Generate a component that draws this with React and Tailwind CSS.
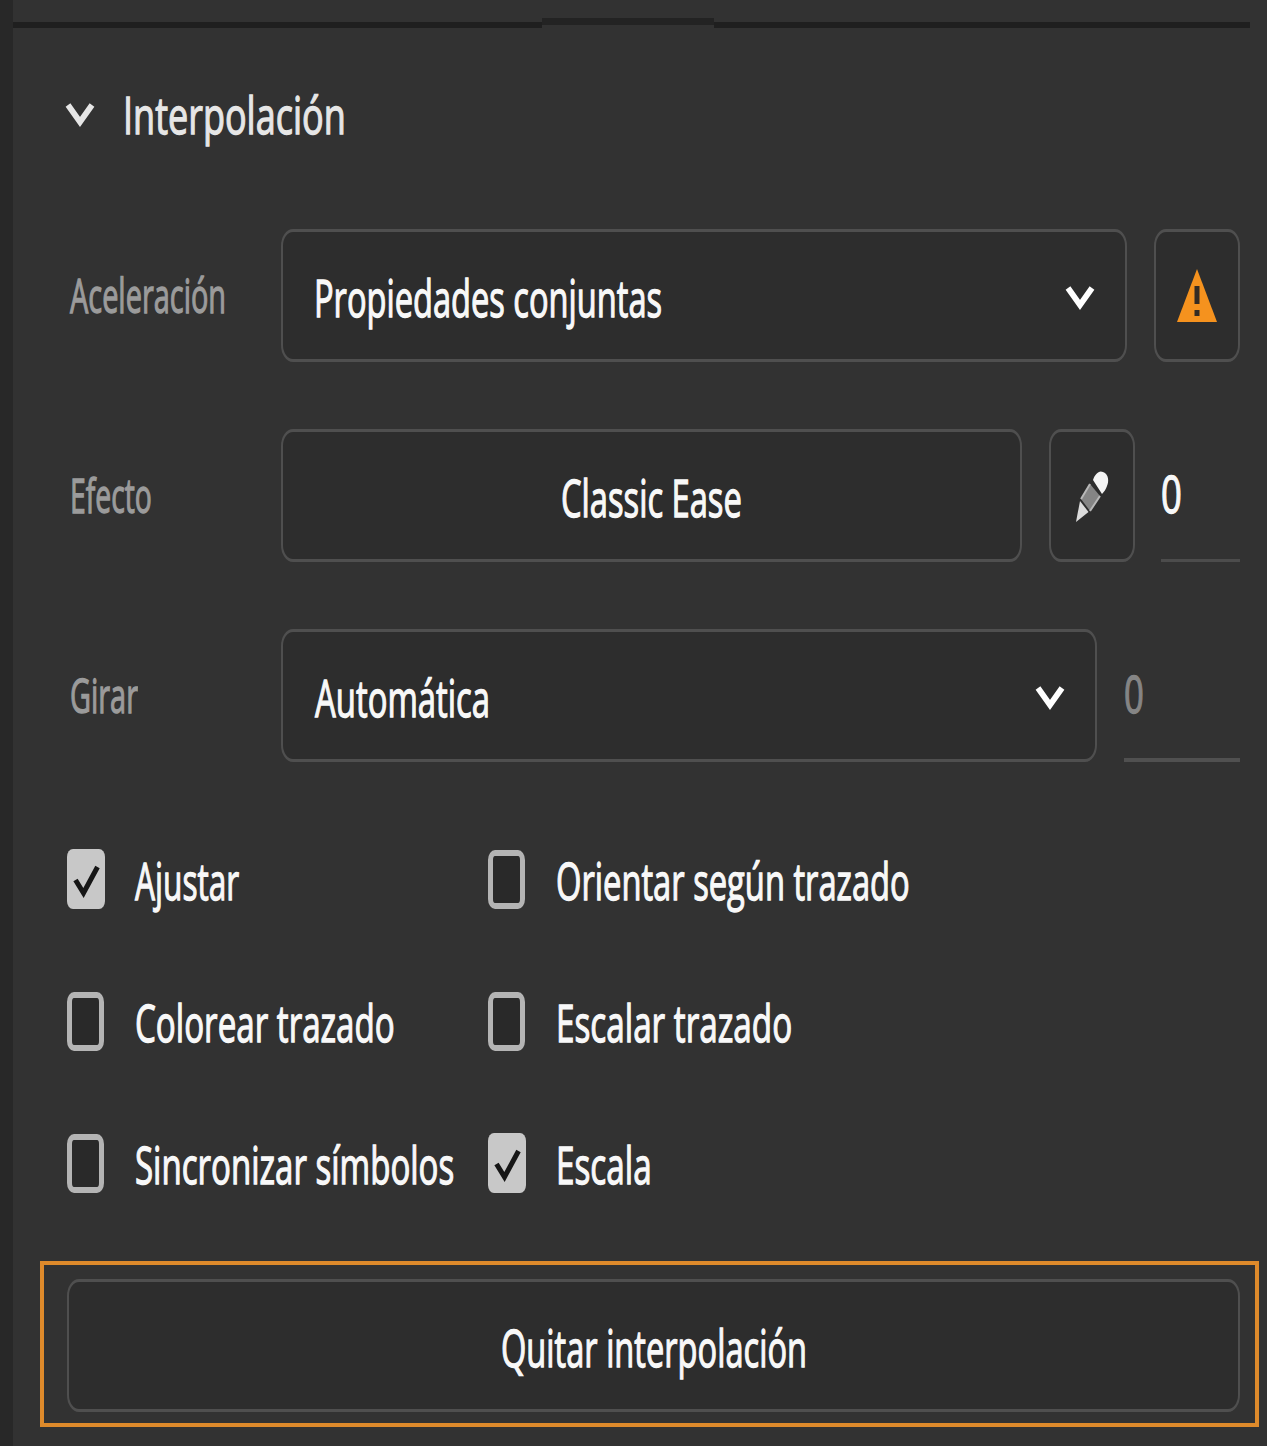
import { useLayoutEffect, useRef, useState } from 'react'

const options = [
  { id: 'snap', label: 'Ajustar', width: 104, checked: true },
  { id: 'orient', label: 'Orientar según trazado', width: 354, checked: false },
  { id: 'color', label: 'Colorear trazado', width: 260, checked: false },
  { id: 'scalePath', label: 'Escalar trazado', width: 236, checked: false },
  { id: 'sync', label: 'Sincronizar símbolos', width: 319, checked: false },
  { id: 'scale', label: 'Escala', width: 96, checked: true },
]

// Condensed text: the line is squeezed horizontally to the given width
function Text({ width, className = '', children }) {
  const ref = useRef(null)
  const [scale, setScale] = useState(0.7)

  useLayoutEffect(() => {
    setScale(width / ref.current.offsetWidth)
  }, [width, children])

  return (
    <span className={`block shrink-0 ${className}`} style={{ width }}>
      <span
        ref={ref}
        className="inline-block origin-left whitespace-nowrap [-webkit-text-stroke:1.3px_currentColor]"
        style={{ transform: `scaleX(${scale})` }}
      >
        {children}
      </span>
    </span>
  )
}

function Chevron({ className = '' }) {
  return (
    <svg viewBox="0 0 30 30" className={`h-[30px] w-[30px] shrink-0 ${className}`} fill="none">
      <path d="M3 6 L15 23 L27 6" stroke="currentColor" strokeWidth="5.8" />
    </svg>
  )
}

function Box({ className = '', children }) {
  return (
    <button
      type="button"
      className={`flex h-[133px] shrink-0 items-center rounded-[12px/17px] border-x-2 border-y-3 border-[#4f4f4f] bg-[#2d2d2d] ${className}`}
    >
      {children}
    </button>
  )
}

function Row({ label, width, children }) {
  return (
    <div className="flex h-[133px] items-center">
      <div className="w-[211px] shrink-0 text-[48px] text-[#9b9b9b]">
        <Text width={width} className="relative -top-px">{label}</Text>
      </div>
      {children}
    </div>
  )
}

function Checkbox({ label, width, checked: initial }) {
  const [checked, setChecked] = useState(initial)

  return (
    <button type="button" className="flex h-[60px] items-center" onClick={() => setChecked(!checked)}>
      {checked ? (
        <span className="block h-[60px] w-[38px] rounded-[6px/8px] bg-[#c8c8c8]">
          <svg viewBox="0 0 38 60" className="h-[60px] w-[38px]" fill="none">
            <path d="M8.5 31 L16.5 44 L30.5 18" stroke="#161616" strokeWidth="5" />
          </svg>
        </span>
      ) : (
        <span className="mr-px block h-[59px] w-[37px] rounded-[7px/10px] border-x-[5px] border-y-[6px] border-[#b4b4b4] bg-[#292929]" />
      )}
      <Text width={width} className="relative top-px ml-[30px]">{label}</Text>
    </button>
  )
}

export default function App() {
  return (
    <div className="flex h-[1446px] w-[1267px] overflow-hidden bg-[#323232] font-['Open_Sans',sans-serif] text-[52px] leading-none text-[#f8f8f8]">
      <div className="w-[13px] shrink-0 bg-[#282828]" />
      <div className="flex w-[1254px] flex-col">
        <div className="flex h-[28px] shrink-0 items-end">
          <div className="h-[6px] w-[529px] bg-[#1f1f1f]" />
          <div className="mb-[3px] h-[7px] w-[172px] bg-[#232323]" />
          <div className="h-[6px] w-[536px] bg-[#1f1f1f]" />
        </div>

        <div className="mt-[62px] flex h-[48px] shrink-0 items-center pl-[52px] text-[#e6e6e6]">
          <Chevron />
          <Text width={223} className="ml-[28px]">Interpolación</Text>
        </div>

        <div className="mt-[91px] flex shrink-0 flex-col gap-[67px] pl-[57px]">
          <Row label="Aceleración" width={156}>
            <Box className="w-[846px] justify-between pr-[30px] pl-[31px]">
              <Text width={348} className="relative top-px">Propiedades conjuntas</Text>
              <Chevron className="mt-[2px] text-white" />
            </Box>
            <Box className="ml-[27px] w-[86px] justify-center">
              <svg viewBox="0 0 40 54" className="h-[54px] w-[40px]">
                <path d="M20 0 L40 53 H0 Z" fill="#f5921e" />
                <path d="M20 17 V35 M20 41 V47" stroke="#332b24" strokeWidth="5" />
              </svg>
            </Box>
          </Row>

          <Row label="Efecto" width={82}>
            <Box className="w-[741px] justify-center">
              <Text width={181} className="relative top-px">Classic Ease</Text>
            </Box>
            <Box className="ml-[27px] w-[86px] justify-center">
              <svg viewBox="0 0 38 56" className="h-[56px] w-[38px]">
                <path d="M20 12 C22 6 26 2 30 4 C36 6 36 14 34 18 C33 21 31 24 29 26 Z" fill="#f4f4f4" />
                <path d="M17 16 L27 28 L17 43 L8 31 Z" fill="#858585" />
                <path d="M17 16 L8 31 M27 28 L17 43" stroke="#b8b8b8" strokeWidth="2" />
                <path d="M7 33 L15.5 44 L3 54 Z" fill="#dcdcdc" />
              </svg>
            </Box>
            <div className="ml-[26px] flex h-[133px] w-[79px] items-center border-b-3 border-[#4c4c4c]">
              <Text width={21} className="relative -top-px">0</Text>
            </div>
          </Row>

          <Row label="Girar" width={68}>
            <Box className="w-[816px] justify-between pr-[30px] pl-[32px]">
              <Text width={175} className="relative top-px">Automática</Text>
              <Chevron className="mt-[2px] text-white" />
            </Box>
            <div className="ml-[27px] flex h-[133px] w-[116px] items-center border-b-4 border-[#505050] text-[#858585]">
              <Text width={20} className="relative -top-px">0</Text>
            </div>
          </Row>
        </div>

        <div className="mt-[87px] grid shrink-0 grid-cols-[421px_1fr] gap-y-[82px] pl-[54px]">
          {options.map((o) => (
            <Checkbox key={o.id} {...o} />
          ))}
        </div>

        <div className="mt-[68px] ml-[27px] flex h-[166px] w-[1219px] shrink-0 border-4 border-[#de8a2b] pt-[14px] pl-[23px]">
          <Box className="w-[1173px] justify-center">
            <Text width={306} className="relative top-px">Quitar interpolación</Text>
          </Box>
        </div>
      </div>
    </div>
  )
}
